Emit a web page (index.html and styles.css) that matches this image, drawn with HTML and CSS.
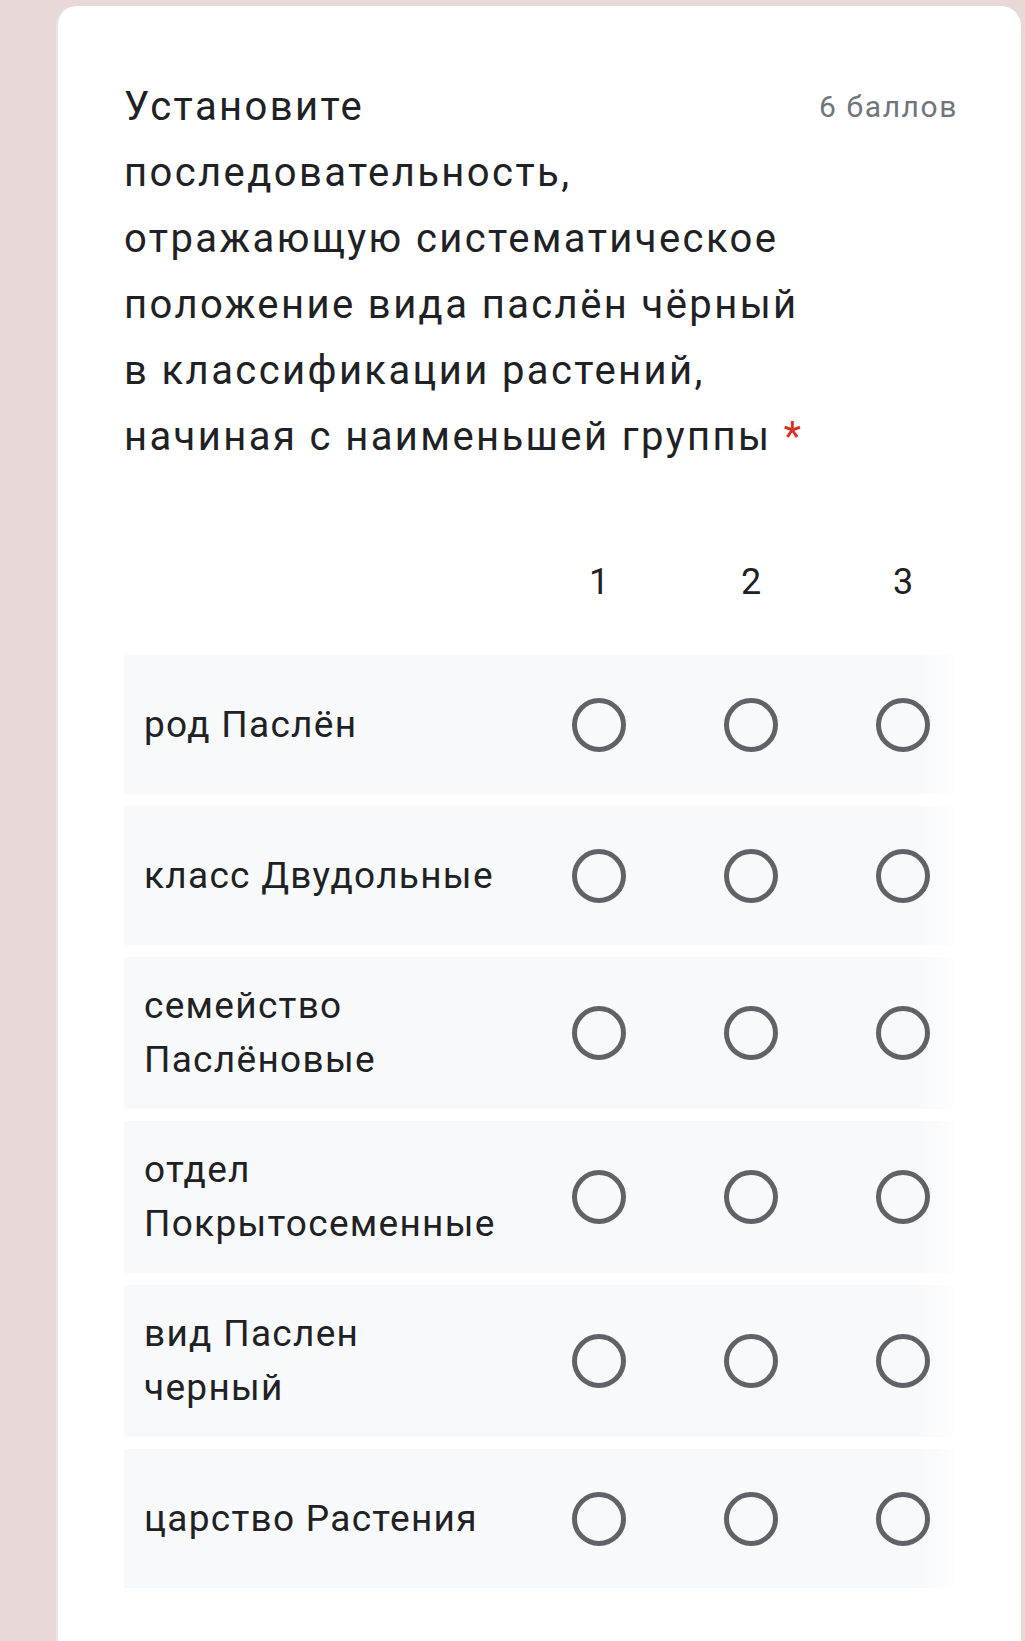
FILE: index.html
```html
<!DOCTYPE html>
<html lang="ru">
<head>
<meta charset="utf-8">
<link rel="stylesheet" href="styles.css">
</head>
<body>
<div class="card">
  <div class="head">
    <div class="title">Установите последовательность, отражающую систематическое положение вида паслён чёрный в&nbsp;классификации растений, начиная с наименьшей группы <span class="req">*</span></div>
    <div class="points">6 баллов</div>
  </div>
  <div class="grid">
    <div class="colhead">
      <div class="label"></div>
      <div class="opt">1</div>
      <div class="opt">2</div>
      <div class="opt">3</div>
    </div>
    <div class="row">
      <div class="label">род Паслён</div>
      <div class="opt"><span class="radio"></span></div>
      <div class="opt"><span class="radio"></span></div>
      <div class="opt"><span class="radio"></span></div>
    </div>
    <div class="row">
      <div class="label">класс Двудольные</div>
      <div class="opt"><span class="radio"></span></div>
      <div class="opt"><span class="radio"></span></div>
      <div class="opt"><span class="radio"></span></div>
    </div>
    <div class="row">
      <div class="label">семейство Паслёновые</div>
      <div class="opt"><span class="radio"></span></div>
      <div class="opt"><span class="radio"></span></div>
      <div class="opt"><span class="radio"></span></div>
    </div>
    <div class="row">
      <div class="label">отдел Покрытосеменные</div>
      <div class="opt"><span class="radio"></span></div>
      <div class="opt"><span class="radio"></span></div>
      <div class="opt"><span class="radio"></span></div>
    </div>
    <div class="row">
      <div class="label">вид Паслен черный</div>
      <div class="opt"><span class="radio"></span></div>
      <div class="opt"><span class="radio"></span></div>
      <div class="opt"><span class="radio"></span></div>
    </div>
    <div class="row">
      <div class="label">царство Растения</div>
      <div class="opt"><span class="radio"></span></div>
      <div class="opt"><span class="radio"></span></div>
      <div class="opt"><span class="radio"></span></div>
    </div>
  </div>
</div>
</body>
</html>
```

FILE: styles.css
```css
html, body {
  margin: 0;
  padding: 0;
}
body {
  background: #e8d8d8;
  font-family: Roboto, "Noto Sans", sans-serif;
  color: #202124;
  width: 1025px;
  height: 1641px;
  overflow: hidden;
}
.card {
  margin: 6px 4px 0 56px;
  background: #ffffff;
  border-radius: 20px 20px 0 0;
  border-left: 2px solid #e3e6ee;
  min-height: 1700px;
  padding: 68px 0 0 66px;
  box-sizing: border-box;
}
.head {
  display: flex;
  align-items: flex-start;
  padding-right: 63px;
}
.title {
  flex: none;
  width: 692px;
  font-size: 40px;
  line-height: 66px;
  letter-spacing: 2.4px;
}
.req {
  color: #d93025;
  letter-spacing: 0;
}
.points {
  margin-left: auto;
  font-size: 30px;
  line-height: 66px;
  letter-spacing: 1.6px;
  color: #70757a;
}
.grid {
  margin-top: 74px;
  width: 829px;
  display: flex;
  flex-direction: column;
  gap: 12px;
}
.colhead, .row {
  display: flex;
  align-items: center;
}
.colhead {
  height: 76px;
  margin-bottom: 23px;
  font-size: 36px;
}
.row {
  min-height: 139px;
  padding: 22px 0 22px 20px;
  box-sizing: border-box;
  background: linear-gradient(to right, #f8f9fa 0, #f8f9fa 96%, #fdfdfe 100%);
  font-size: 37px;
  line-height: 54px;
  letter-spacing: 1.3px;
}
.colhead .label {
  padding-left: 20px;
}
.label {
  flex: 1;
  min-width: 0;
  padding-right: 50px;
  margin-right: -26px;
}
.opt {
  width: 100px;
  flex: none;
  display: flex;
  justify-content: center;
  align-items: center;
  margin-left: 52px;
  letter-spacing: 0;
}
.opt:nth-child(2) {
  margin-left: 26px;
}
.radio {
  width: 44px;
  height: 44px;
  border: 5.5px solid #5f6368;
  border-radius: 50%;
  display: block;
}
```
